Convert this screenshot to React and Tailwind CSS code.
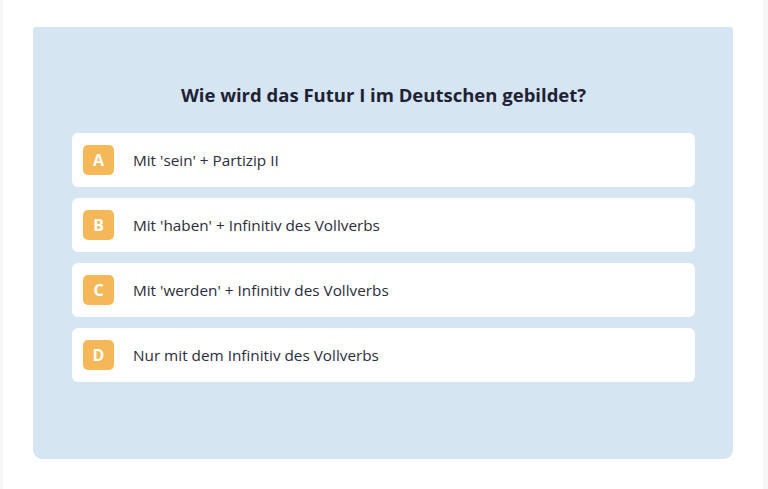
import React from "react";

const options = [
  { letter: "A", text: "Mit 'sein' + Partizip II" },
  { letter: "B", text: "Mit 'haben' + Infinitiv des Vollverbs" },
  { letter: "C", text: "Mit 'werden' + Infinitiv des Vollverbs" },
  { letter: "D", text: "Nur mit dem Infinitiv des Vollverbs" },
];

export default function App() {
  return (
    <div
      className="w-full h-[489px] bg-[#f6f6f6] pl-[3px] pr-[5px] overflow-hidden"
      style={{ fontFamily: '"Open Sans", "Noto Sans", sans-serif' }}
    >
      <div className="h-full bg-white pt-[27px] pl-[30px] pr-[30px]">
        <div className="h-[432px] bg-[#d6e5f2] rounded-t-[3px] rounded-b-[9px] pt-[56px] pl-[39px] pr-[38px]">
          <h1 className="text-center text-[18.5px] leading-[24px] font-bold text-[#1e2235] mb-[26px]">
            Wie wird das Futur I im Deutschen gebildet?
          </h1>
          <div className="flex flex-col gap-[11px]">
            {options.map((o) => (
              <div
                key={o.letter}
                className="h-[54px] bg-white rounded-[6px] flex items-center pl-[11px]"
              >
                <div className="w-[31px] h-[30px] rounded-[5px] bg-[#f5b858] flex items-center justify-center text-white font-bold text-[16px]">
                  {o.letter}
                </div>
                <span className="ml-[19px] text-[15.3px] text-[#2b2d3a]">{o.text}</span>
              </div>
            ))}
          </div>
        </div>
      </div>
    </div>
  );
}
